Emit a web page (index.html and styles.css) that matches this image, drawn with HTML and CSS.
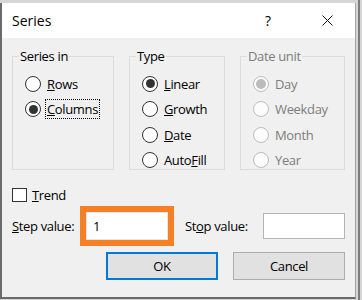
FILE: index.html
```html
<!DOCTYPE html>
<html lang="en">
<head>
  <meta charset="UTF-8">
  <title>Series</title>
  <link rel="stylesheet" href="styles.css">
</head>
<body>
<div class="dialog">
  <!-- title bar -->
  <div class="titlebar">
    <span class="title">Series</span>
    <span class="help">?</span>
    <svg class="close" width="11" height="11" viewBox="0 0 11 11">
      <path d="M0.5 0.5 L10.5 10.5 M10.5 0.5 L0.5 10.5" stroke="#111" stroke-width="1" fill="none"/>
    </svg>
  </div>

  <div class="content">
    <!-- option groups -->
    <div class="groups">
      <fieldset class="group group-series">
        <legend>Series in</legend>
        <div class="options">
          <div class="option"><span class="radio"></span><span class="label"><u>R</u>ows</span></div>
          <div class="option"><span class="radio checked"></span><span class="label focus"><u>C</u>olumns</span></div>
        </div>
      </fieldset>

      <fieldset class="group group-type">
        <legend>Type</legend>
        <div class="options">
          <div class="option"><span class="radio checked"></span><span class="label"><u>L</u>inear</span></div>
          <div class="option"><span class="radio"></span><span class="label"><u>G</u>rowth</span></div>
          <div class="option"><span class="radio"></span><span class="label"><u>D</u>ate</span></div>
          <div class="option"><span class="radio"></span><span class="label">Auto<u>F</u>ill</span></div>
        </div>
      </fieldset>

      <fieldset class="group group-date disabled">
        <legend>Date unit</legend>
        <div class="options">
          <div class="option"><span class="radio checked"></span><span class="label">Day</span></div>
          <div class="option"><span class="radio"></span><span class="label">Weekday</span></div>
          <div class="option"><span class="radio"></span><span class="label">Month</span></div>
          <div class="option"><span class="radio"></span><span class="label">Year</span></div>
        </div>
      </fieldset>
    </div>

    <!-- trend -->
    <div class="trend">
      <span class="checkbox"></span><span class="label"><u>T</u>rend</span>
    </div>

    <!-- step / stop values -->
    <div class="values">
      <span class="value-label step-label"><u>S</u>tep value:</span>
      <div class="highlight"><div class="input">1</div></div>
      <span class="value-label stop-label">St<u>o</u>p value:</span>
      <div class="input stop-input"></div>
    </div>

    <!-- buttons -->
    <div class="buttons">
      <button class="btn btn-default">OK</button>
      <button class="btn">Cancel</button>
    </div>
  </div>
</div>
</body>
</html>
```

FILE: styles.css
```css
body {
  margin: 0;
  width: 362px;
  height: 300px;
  overflow: hidden;
  font-family: "Open Sans", "Noto Sans", sans-serif;
  font-size: 13px;
  letter-spacing: -0.35px;
  color: #000;
  background-color: #d6d6d6;
  background-image: linear-gradient(to right, transparent 358px, #7c7c7c 358px, #7c7c7c 360px, transparent 360px);
}
.dialog {
  margin-top: 3px;
  width: 353px;
  height: 294px;
  border-left: 2px solid #6b6b6b;
  border-right: 1px solid #a3a3a3;
  border-bottom: 2px solid #6b6b6b;
  background-color: #f0f0f0;
  display: flex;
  flex-direction: column;
}
.titlebar {
  height: 35px;
  background-color: #fff;
  display: flex;
  align-items: center;
  padding-left: 10px;
  font-size: 14px;
  letter-spacing: 0;
}
.title {
  flex: 1;
}
.help {
  margin-right: 51px;
  font-size: 14px;
}
.close {
  margin-right: 22px;
}
.content {
  padding: 0 10px;
  display: flex;
  flex-direction: column;
}
.groups {
  display: flex;
  gap: 15px;
  margin-top: 10px;
}
.group {
  margin: 0;
  min-width: 0;
  height: 113px;
  padding: 7px 0 0 0;
  border: 1px solid #dcdcdc;
}
.group legend {
  margin-left: 6px;
  padding: 0 1px;
  line-height: 16px;
}
.group-series { width: 100px; }
.group-type { width: 94px; }
.group-date { width: 103px; }
.options {
  padding-left: 12px;
  display: flex;
  flex-direction: column;
}
.option {
  height: 25.5px;
  display: flex;
  align-items: center;
}
.radio {
  box-sizing: border-box;
  width: 16px;
  height: 16px;
  border: 1px solid #333;
  border-radius: 50%;
  background-color: #fff;
  margin-right: 4px;
  display: flex;
  align-items: center;
  justify-content: center;
  flex-shrink: 0;
}
.radio.checked::after {
  content: "";
  width: 9px;
  height: 9px;
  border-radius: 50%;
  background-color: #333;
}
.label {
  padding: 1px;
  border: 1px solid transparent;
  line-height: 16px;
  white-space: nowrap;
}
.label.focus {
  border: 1px dotted #000;
}
.disabled {
  color: #7d7d7d;
}
.disabled .radio {
  border-color: #bcbcbc;
  background-color: #fcfcfc;
}
.disabled .radio.checked::after {
  width: 10px;
  height: 10px;
  background-color: #bcbcbc;
}
.trend {
  margin-top: 17px;
  height: 16px;
  display: flex;
  align-items: center;
}
.checkbox {
  box-sizing: border-box;
  width: 15px;
  height: 14px;
  border: 1px solid #333;
  background-color: #fff;
  margin-right: 3px;
}
.values {
  margin-top: 3px;
  height: 40px;
  display: flex;
  align-items: center;
}
.value-label {
  white-space: nowrap;
}
.step-label {
  width: 68px;
}
.stop-label {
  margin-left: 11px;
  width: 78px;
}
.highlight {
  border: 6px solid #f58025;
  width: 82px;
  height: 28px;
}
.input {
  box-sizing: border-box;
  height: 100%;
  border: 1px solid #e6e6e6;
  background-color: #fff;
  padding-left: 6px;
  line-height: 26px;
}
.stop-input {
  width: 82px;
  height: 26px;
  border-color: #b4b4b4;
}
.buttons {
  margin-top: 6px;
  display: flex;
  justify-content: flex-end;
  gap: 15px;
}
.btn {
  box-sizing: border-box;
  width: 112px;
  height: 28px;
  font-family: inherit;
  font-size: 13px;
  letter-spacing: inherit;
  color: #000;
  background-color: #e1e1e1;
  border: 1px solid #adadad;
  padding: 0;
}
.btn-default {
  border: 2px solid #0078d7;
}
```
